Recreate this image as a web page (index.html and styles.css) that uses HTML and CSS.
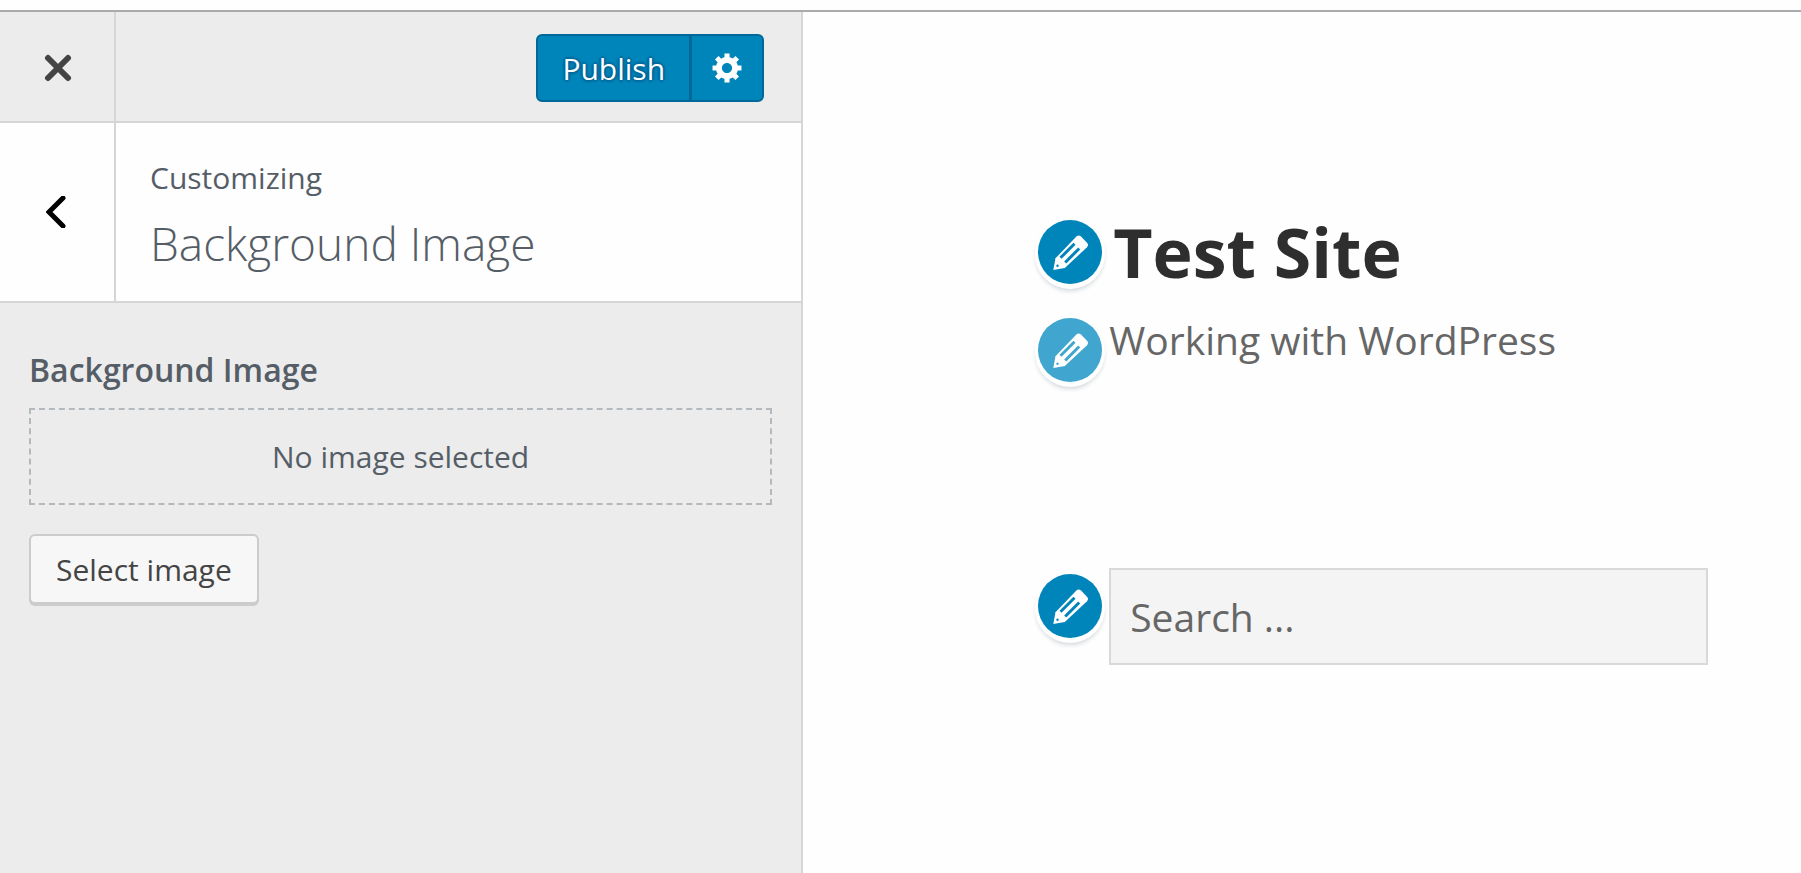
FILE: index.html
```html
<!DOCTYPE html>
<html lang="en">
<head>
  <meta charset="utf-8">
  <title>Customize: Test Site</title>
  <link rel="stylesheet" href="styles.css">
</head>
<body>
  <svg class="sprite" aria-hidden="true">
    <symbol id="icon-edit" viewBox="0 0 64 64">
      <path class="pencil" d="M15.3 50L17.5 38.3 38.4 16.6q2.3-2 4.6 0L49 22.8q2 2.2 0 4.4L26.8 48z"/>
      <path class="pencil-lines" d="M22.5 37.8L36.5 23.8M27.2 42.5L41.2 28.5"/>
      <circle class="pencil-tip" cx="19.5" cy="45.8" r="1.2"/>
    </symbol>
  </svg>

  <div class="customizer">
    <aside class="sidebar">
      <header class="sidebar-header">
        <button class="icon-btn close-btn" aria-label="Close">
          <svg width="28" height="28" viewBox="0 0 28 28"><path d="M4 4l20 20M24 4L4 24"/></svg>
        </button>
        <div class="actions">
          <button class="publish-btn">Publish</button>
          <button class="settings-btn" aria-label="Publish settings">
            <svg width="34" height="34" viewBox="-0.5 0.5 20 20"><path d="M18 12h-2.18c-.17.7-.44 1.35-.81 1.93l1.54 1.54-2.1 2.1-1.54-1.54c-.58.36-1.23.63-1.91.79V19H8v-2.18c-.68-.16-1.33-.43-1.91-.79l-1.54 1.54-2.12-2.12 1.54-1.54c-.36-.58-.63-1.23-.79-1.91H1V9.03h2.17c.16-.7.44-1.35.8-1.94L2.43 5.55l2.1-2.1 1.54 1.54c.58-.37 1.24-.64 1.93-.81V2h3v2.18c.68.16 1.33.43 1.91.79l1.54-1.54 2.12 2.12-1.54 1.54c.36.59.64 1.24.8 1.94H18V12zm-8.5 1.5c1.66 0 3-1.34 3-3s-1.34-3-3-3-3 1.34-3 3 1.34 3 3 3z"/></svg>
          </button>
        </div>
      </header>

      <div class="section-title">
        <button class="icon-btn back-btn" aria-label="Back">
          <svg width="20" height="32" viewBox="0 0 20 32"><path d="M17 2L3 16l14 14"/></svg>
        </button>
        <h2>
          <span class="breadcrumb">Customizing</span>
          Background Image
        </h2>
      </div>

      <div class="controls">
        <h3>Background Image</h3>
        <div class="placeholder">No image selected</div>
        <button class="select-btn">Select image</button>
      </div>
    </aside>

    <main class="preview">
      <div class="partial">
        <button class="edit-btn" aria-label="Edit site title"><svg width="64" height="64"><use href="#icon-edit"/></svg></button>
        <h1>Test Site</h1>
      </div>
      <div class="partial partial-tagline">
        <button class="edit-btn faded" aria-label="Edit tagline"><svg width="64" height="64"><use href="#icon-edit"/></svg></button>
        <p>Working with WordPress</p>
      </div>
      <div class="partial partial-search">
        <button class="edit-btn" aria-label="Edit search widget"><svg width="64" height="64"><use href="#icon-edit"/></svg></button>
        <input type="search" class="search-field" placeholder="Search ..." aria-label="Search">
      </div>
    </main>
  </div>
</body>
</html>
```
FILE: styles.css
```css
* {
  box-sizing: border-box;
}

body {
  margin: 0;
  padding-top: 10px;
  background: #fefefe;
  font-family: "Open Sans", "Noto Sans", sans-serif;
}

button,
input {
  font-family: inherit;
}

button {
  cursor: pointer;
}

h1, h2, h3, p {
  margin: 0;
}

.sprite {
  display: none;
}

.customizer {
  display: flex;
  min-height: calc(100vh - 10px);
  border-top: 2px solid #aaabad;
}

.sidebar {
  width: 44.6%;
  background: #ececec;
  border-right: 2px solid #d6d6d6;
}

.sidebar-header {
  display: flex;
  justify-content: space-between;
  height: 111px;
  border-bottom: 2px solid #d6d6d6;
}

.icon-btn {
  display: flex;
  flex: none;
  align-items: center;
  justify-content: center;
  width: 116px;
  padding: 2px 0 0 2px;
  border: 0;
  border-right: 2px solid #d6d6d6;
  background: none;
}

.icon-btn svg {
  fill: none;
  stroke: #444;
  stroke-width: 6;
  stroke-linecap: round;
}

.back-btn {
  padding: 0 2px 0 0;
}

.back-btn svg {
  stroke: #000;
  stroke-width: 5;
}

.actions {
  display: flex;
  height: 68px;
  margin: 22px 37px 0 0;
}

.publish-btn,
.settings-btn {
  display: flex;
  align-items: center;
  justify-content: center;
  padding: 0;
  border: 2px solid #006799;
  background: #0085ba;
  color: #fff;
}

.publish-btn {
  width: 155px;
  border-radius: 6px 0 0 6px;
  font-size: 30px;
  text-shadow: 0 -2px 2px #006799, 2px 0 2px #006799, 0 2px 2px #006799, -2px 0 2px #006799;
}

.settings-btn {
  width: 73px;
  border-left-width: 1px;
  border-radius: 0 6px 6px 0;
}

.settings-btn svg {
  fill: #fff;
}

.section-title {
  display: flex;
  height: 180px;
  border-bottom: 2px solid #d6d6d6;
  background: #fefefe;
}

.section-title h2 {
  padding: 34px 0 0 34px;
  color: #555d66;
  font-size: 46px;
  font-weight: 300;
  line-height: 88px;
}

.breadcrumb {
  display: block;
  font-size: 30px;
  font-weight: 400;
  line-height: 42px;
}

.controls {
  padding: 45px 29px;
}

.controls h3 {
  color: #555d66;
  font-size: 32px;
  font-weight: 600;
  line-height: 44px;
}

.placeholder {
  margin: 16px 0 29px;
  padding: 24px 0;
  border: 2px dashed #b4b9be;
  color: #555d66;
  font-size: 30px;
  line-height: 45px;
  text-align: center;
}

.select-btn {
  height: 70px;
  padding: 0 25px;
  border: 2px solid #ccc;
  border-radius: 6px;
  background: #f7f7f7;
  box-shadow: 0 2px 0 #ccc;
  color: #444;
  font-size: 30px;
}

.preview {
  flex: 1;
  padding: 208px 93px 0 235px;
}

.partial {
  display: flex;
  gap: 7px;
}

.partial-tagline {
  margin-top: 34px;
}

.partial-search {
  margin-top: 186px;
}

.edit-btn {
  display: flex;
  flex: none;
  align-items: center;
  justify-content: center;
  width: 64px;
  height: 64px;
  padding: 0;
  border: 0;
  border-radius: 50%;
  background: #0085ba;
  box-shadow: 0 2px 0 3px #fff, 0 5px 4px 2px rgba(46, 68, 83, 0.2);
  color: #0085ba;
}

.faded {
  background: #40a6cf;
  color: #40a6cf;
}

.pencil {
  fill: #fff;
}

.pencil-lines {
  fill: none;
  stroke: currentColor;
  stroke-width: 3;
}

.pencil-tip {
  fill: currentColor;
}

.partial h1 {
  padding-left: 4px;
  color: #2e2e2e;
  font-size: 68px;
  font-weight: 700;
  line-height: 64px;
}

.partial p {
  color: #666;
  font-size: 39px;
  line-height: 44px;
}

.partial-search .edit-btn {
  margin-top: 6px;
}

.search-field {
  flex: 1;
  min-width: 0;
  height: 97px;
  padding: 0 19px;
  border: 2px solid #d9d9d9;
  border-radius: 0;
  background: #f4f4f4;
  font-size: 39px;
}

.search-field::placeholder {
  color: #666;
  opacity: 1;
}
```
